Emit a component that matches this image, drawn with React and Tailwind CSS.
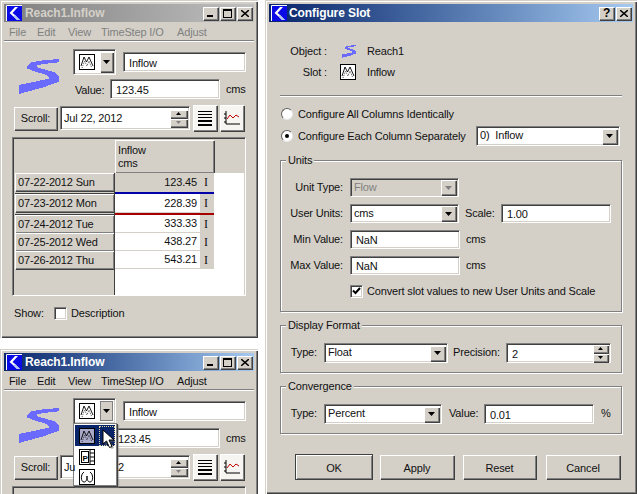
import React from 'react';

const sunken = 'border border-t-[#808080] border-l-[#808080] border-r-white border-b-white shadow-[inset_1px_1px_0_#404040,inset_-1px_-1px_0_#d4d0c8]';
const bevel = 'shadow-[inset_1px_1px_0_#fff,inset_-1px_-1px_0_#808080,1px_1px_0_#404040]';
const raised = `bg-[#d4d0c8] ${bevel}`;
const frame = 'bg-[#d4d0c8] shadow-[inset_1px_1px_0_#d4d0c8,inset_2px_2px_0_#fff,inset_-1px_-1px_0_#404040,inset_-2px_-2px_0_#808080]';

const Logo = () => (
  <svg width="16" height="16" viewBox="0 0 16 16" className="shrink-0">
    <rect width="16" height="16" fill="#0a0ae6" />
    <path d="M0.5 16V0.5H16" fill="none" stroke="#fff" />
    <path d="M12 2 L9 2 L3.5 8 L8 12 L11 15 L14 15 L9 10 L6.5 8 Z" fill="#fff" />
    <path d="M9 10 L14 15 L11 15 L7.5 11.5 Z" fill="#b4c8f0" />
  </svg>
);

const River = ({ w = 40, h = 35 }) => (
  <svg width={w} height={h} viewBox="0 0 120 105" shapeRendering="crispEdges" className="shrink-0">
    <path d="M120 0 L63 5 L38 10 L25 20 L23 28 L43 36 L83 48 L93 58 L48 68 L0 78 L0 105 L73 85 L120 68 L120 53 L108 40 L58 26 L53 20 L73 15 L120 10 Z" fill="#6a6aff" />
  </svg>
);

const SlotIcon = ({ size = 16, invert = false }) => (
  <svg width={size} height={size} viewBox="0 0 16 16" className="shrink-0">
    <rect x="0.5" y="0.5" width="15" height="15" fill={invert ? '#a8a8c8' : '#fff'} stroke="#000" />
    <path d="M2 12 L5 3 L7.5 8 L10 3 L14 12" fill="none" stroke="#000" strokeWidth="0.9" />
    <path d="M3 14 L5.5 7 L8 12 L10 7 L12.5 13" fill="none" stroke="#000" strokeWidth="0.7" strokeDasharray="1 1" />
  </svg>
);

const Arrow = ({ disabled, up, small }) => (
  <svg width={small ? 5 : 7} height={small ? 3 : 4} viewBox="0 0 7 4" preserveAspectRatio="none" className={up ? 'rotate-180' : ''}>
    <path d="M0 0 H7 L3.5 4 Z" fill={disabled ? '#808080' : '#000'} />
  </svg>
);

const Field = ({ w, h = 'h-[20px]', children, className = '' }) => (
  <div className={`${sunken} ${h} ${className} bg-white flex items-center pl-[5px] pt-[2px] shrink-0`} style={{ width: w }}>
    {children}
  </div>
);

const Combo = ({ w, h = 'h-[20px]', text, disabled }) => (
  <div className={`${sunken} ${h} flex items-center shrink-0 pl-[3px] pr-[2px] ${disabled ? 'bg-[#d4d0c8] text-[#808080]' : 'bg-white'}`} style={{ width: w }}>
    <span className="flex-1 whitespace-pre pb-px">{text}</span>
    <span className={`${raised} w-[15px] h-[15px] flex items-center justify-center`}>
      <Arrow disabled={disabled} />
    </span>
  </div>
);

const Spin = ({ wide }) => (
  <div className={`flex flex-col gap-px shrink-0 ${wide ? 'w-[17px]' : 'w-[15px]'}`}>
    <span className={`${raised} h-[8px] flex items-center justify-center`}><Arrow up small /></span>
    <span className={`${raised} h-[8px] flex items-center justify-center`}><Arrow small disabled={wide} /></span>
  </div>
);

const TitleBar = ({ title, active, buttons, gap = 'ml-[3px]' }) => (
  <div className={`h-[18px] flex items-center pl-[2px] pr-[2px] font-bold ${active ? 'bg-gradient-to-r from-[#0a246a] to-[#a6caf0] text-white' : 'bg-gradient-to-r from-[#808080] to-[#c0c0c0] text-[#d4d0c8]'}`}>
    <Logo />
    <span className={`${gap} flex-1 text-[12px] tracking-[-0.1px]`}>{title}</span>
    <div className="flex gap-[2px]">
      {buttons.map((b, i) => (
        <span key={i} className={`${raised} w-[15px] h-[13px] flex items-center justify-center text-black`}>
          {b}
        </span>
      ))}
    </div>
  </div>
);

const MinBtn = <span className="w-[6px] h-[2px] bg-black mt-[6px] -ml-[2px]" />;
const MaxBtn = <span className="w-[9px] h-[9px] border border-black border-t-2" />;
const CloseBtn = (
  <svg width="8" height="7" viewBox="0 0 8 7"><path d="M0 0 L8 7 M8 0 L0 7" stroke="#000" strokeWidth="1.5" /></svg>
);

const rows = [
  { date: '07-22-2012 Sun', val: '123.45', gray: true, h: 'h-[19px]' },
  { date: '07-23-2012 Mon', val: '228.39', h: 'h-[19px]' },
  { date: '07-24-2012 Tue', val: '333.33', h: 'h-[18px]' },
  { date: '07-25-2012 Wed', val: '438.27', h: 'h-[18px]' },
  { date: '07-26-2012 Thu', val: '543.21', h: 'h-[18px]' },
];

const SlotTable = ({ empty }) => (
  <div className={`${sunken} ml-[12px] mt-[6px] w-[234px] h-[159px] p-px`}>
    {!empty && (
      <>
        <div className="flex h-[34px] pl-px pt-px">
          <div className="w-[100px]" />
          <div className={`${raised} w-[99px] pl-[3px] pt-[4px] leading-[13px]`}>Inflow<br />cms</div>
        </div>
        <div className="flex h-[122px]">
          <div className="w-[101px] pl-px border-r border-[#404040]">
            {rows.map((r, i) => (
              <div key={r.date} className={i < 2 ? 'h-[21px] border-b border-[#404040] pb-[2px]' : 'h-[18px]'}>
                <div className={`${raised} h-[18px] pl-[3px] flex items-center`}>{r.date}</div>
              </div>
            ))}
          </div>
          <div className="flex-1 bg-white">
            {rows.map((r, i) => (
              <div key={r.date} className="w-[99px]">
                <div className={`flex ${r.h} border-b ${r.gray ? 'bg-[#d4d0c8] border-[#d4d0c8]' : 'border-[#d4d0c8]'}`}>
                  <span className="w-[85px] text-right pr-[3px] flex items-center justify-end">{r.val}</span>
                  <span className="flex-1 bg-[#d4d0c8] pl-[4px] flex items-center font-['Liberation_Serif',serif] text-[12px]">I</span>
                </div>
                {i === 0 && <div className="h-[2px] bg-[#0000a8]" />}
                {i === 1 && <div className="h-[2px] bg-[#a80000]" />}
              </div>
            ))}
          </div>
        </div>
      </>
    )}
  </div>
);

const ReachWindow = ({ active, pressed }) => (
  <div className={`${frame} w-[258px] h-[338px] pt-[4px] pb-[2px]`}>
    <div className="mx-[4px]">
      <TitleBar title="Reach1.Inflow" active={active} buttons={[MinBtn, MaxBtn, CloseBtn]} />
    </div>
    <div className={`flex h-[18px] items-center pl-[9px] pt-[2px] ${active ? '' : 'text-[#808080]'}`}>
      <span className="w-[28px]">File</span>
      <span className="w-[31px]">Edit</span>
      <span className="w-[33px]">View</span>
      <span className="w-[76px]">TimeStep I/O</span>
      <span>Adjust</span>
    </div>
    <div className="mx-[4px] h-[2px] border-t border-[#808080] border-b border-b-white" />
    <div className="flex pl-[19px] pt-[7px]">
      <div className="mt-[10px]"><River /></div>
      <div className="ml-[14px]">
        <div className="flex">
          <div className={`${sunken} w-[43px] h-[26px] flex items-center pl-[5px] pr-[2px] bg-white`}>
            <SlotIcon />
            <span className={`ml-[5px] w-[15px] h-[20px] flex items-center justify-center ${pressed ? 'bg-[#d4d0c8] border border-[#808080]' : raised}`}>
              <Arrow />
            </span>
          </div>
          <Field w={123} className="ml-[7px] mt-[3px]">Inflow</Field>
        </div>
        <div className="flex items-center mt-[4px] ml-[2px]">
          <span className="w-[35px] pt-[2px]">Value:</span>
          {active ? (
            <div className={`${sunken} w-[110px] h-[20px] bg-white`} />
          ) : (
            <Field w={110}>123.45</Field>
          )}
          <span className="ml-[6px] pt-px">cms</span>
        </div>
      </div>
    </div>
    <div className="flex items-center pl-[14px] mt-[6px]">
      <div className={`${raised} w-[43px] h-[23px] flex items-center justify-center`}>Scroll:</div>
      <div className={`${sunken} ml-[3px] w-[130px] h-[24px] bg-white flex items-center pl-[3px] pr-[2px]`}>
        <span className="flex-1">{active ? '' : 'Jul 22, 2012'}</span>
        <Spin wide />
      </div>
      <div className={`bg-[#f6f5f2] ${bevel} ml-[3px] w-[24px] h-[26px] flex flex-col items-center justify-center gap-[2px]`}>
        <span className="w-[14px] h-px bg-black" />
        <span className="w-[14px] h-px bg-black" />
        <span className="w-[14px] h-px bg-black" />
        <span className="w-[14px] h-[2px] bg-black" />
        <span className="w-[14px] h-[2px] bg-black" />
      </div>
      <div className={`bg-[#f6f5f2] ${bevel} ml-[3px] w-[24px] h-[26px] flex items-center justify-center`}>
        <svg width="18" height="18" viewBox="0 0 18 18">
          <path d="M3 2 V15 H17 M1 5 H3 M1 9 H3 M1 13 H3" fill="none" stroke="#000" />
          <path d="M4 10 L7 6 L10 9 L13 6 L16 8" fill="none" stroke="#c00000" />
        </svg>
      </div>
    </div>
    <SlotTable empty={active} />
    {!active && (
      <div className="flex items-center pl-[14px] mt-[9px]">
        <span className="w-[40px]">Show:</span>
        <span className={`${sunken} w-[13px] h-[13px] bg-white`} />
        <span className="ml-[4px]">Description</span>
      </div>
    )}
  </div>
);

const Group = ({ label, className, children }) => (
  <div className={`relative mx-[15px] border border-[#808080] shadow-[inset_1px_1px_0_#fff,1px_1px_0_#fff] ${className}`}>
    <span className="absolute -top-[8px] left-[5px] bg-[#d4d0c8] px-[2px] leading-[14px]">{label}</span>
    {children}
  </div>
);

const Label = ({ w, children }) => (
  <span className="text-right shrink-0 mr-[7px] pb-px" style={{ width: w }}>{children}</span>
);

const Radio = ({ on }) => (
  <span className="w-[12px] h-[12px] rounded-full bg-white border border-t-[#606060] border-l-[#606060] border-r-[#e8e8e8] border-b-[#e8e8e8] flex items-center justify-center shrink-0">
    {on && <span className="w-[4px] h-[4px] rounded-full bg-black" />}
  </span>
);

const Btn = ({ w, def, children }) => (
  <div className={`${raised} h-[24px] pt-[2px] flex items-center justify-center shrink-0 ${def ? 'outline outline-1 outline-[#404040]' : ''}`} style={{ width: w }}>
    {children}
  </div>
);

const ConfigureSlot = () => (
  <div className={`${frame} absolute left-[265px] top-0 w-[372px] h-[494px] pt-[4px]`}>
    <div className="mx-[4px]">
      <TitleBar title="Configure Slot" active gap="ml-[2px]" buttons={[<span className="text-[12px] font-bold">?</span>, CloseBtn]} />
    </div>
    <div className="flex items-center mt-[21px] h-[16px]">
      <span className="w-[62px] text-right">Object :</span>
      <span className="ml-[14px] w-[26px]"><River w={16} h={13} /></span>
      <span>Reach1</span>
    </div>
    <div className="flex items-center mt-[5px] h-[16px]">
      <span className="w-[62px] text-right">Slot :</span>
      <span className="ml-[13px] w-[27px]"><SlotIcon /></span>
      <span>Inflow</span>
    </div>
    <div className="mx-[15px] mt-[15px] h-[2px] border-t border-[#808080] border-b border-b-white" />
    <div className="flex items-center ml-[16px] mt-[10px] h-[14px]">
      <Radio />
      <span className="ml-[5px]">Configure All Columns Identically</span>
    </div>
    <div className="flex items-center ml-[16px] h-[20px] mt-[5px]">
      <Radio on />
      <span className="ml-[5px] w-[178px]">Configure Each Column Separately</span>
      <Combo w={144} text="0)  Inflow" />
    </div>
    <Group label="Units" className="mt-[14px] h-[152px] pt-[17px]">
      <div className="flex items-center">
        <Label w={62}>Unit Type:</Label>
        <Combo w={109} h="h-[19px]" text="Flow" disabled />
      </div>
      <div className="flex items-center mt-[7px]">
        <Label w={62}>User Units:</Label>
        <Combo w={109} h="h-[19px]" text="cms" />
        <span className="ml-[6px] w-[36px] pb-px">Scale:</span>
        <Field w={110} h="h-[19px]">1.00</Field>
      </div>
      <div className="flex items-center mt-[7px]">
        <Label w={62}>Min Value:</Label>
        <Field w={110} h="h-[19px]">NaN</Field>
        <span className="ml-[6px]">cms</span>
      </div>
      <div className="flex items-center mt-[7px]">
        <Label w={62}>Max Value:</Label>
        <Field w={110} h="h-[19px]">NaN</Field>
        <span className="ml-[6px]">cms</span>
      </div>
      <div className="flex items-center ml-[69px] mt-[8px]">
        <span className={`${sunken} w-[13px] h-[13px] bg-white flex items-center justify-center`}>
          <svg width="9" height="8" viewBox="0 0 9 8"><path d="M1 3.5 L3.5 6 L8 1" fill="none" stroke="#000" strokeWidth="2" /></svg>
        </span>
        <span className="ml-[4px]">Convert slot values to new User Units and Scale</span>
      </div>
    </Group>
    <Group label="Display Format" className="mt-[13px] h-[48px] pt-[17px]">
      <div className="flex items-center">
        <Label w={36}>Type:</Label>
        <Combo w={124} text="Float" />
        <span className="ml-[5px] w-[53px] pb-px">Precision:</span>
        <div className={`${sunken} w-[105px] h-[20px] bg-white flex items-center pl-[5px] pr-[2px]`}>
          <span className="flex-1 pt-[2px]">2</span>
          <Spin />
        </div>
      </div>
    </Group>
    <Group label="Convergence" className="mt-[13px] h-[48px] pt-[17px]">
      <div className="flex items-center">
        <Label w={36}>Type:</Label>
        <Combo w={118} text="Percent" />
        <span className="ml-[7px] w-[35px] pb-px">Value:</span>
        <Field w={110}>0.01</Field>
        <span className="ml-[7px] pb-px">%</span>
      </div>
    </Group>
    <div className="flex ml-[31px] mt-[21px]">
      <Btn w={76} def>OK</Btn>
      <div className="ml-[8px]"><Btn w={74}>Apply</Btn></div>
      <div className="ml-[9px]"><Btn w={73}>Reset</Btn></div>
      <div className="ml-[10px]"><Btn w={74}>Cancel</Btn></div>
    </div>
  </div>
);

const TypeMenu = () => (
  <div className="absolute left-[73px] top-[423px] w-[44px] h-[63px] bg-white border border-[#808080] shadow-[1px_1px_0_#404040,2px_2px_1px_#80808080] px-px pt-px flex flex-col">
    <div className="flex h-[21px] bg-[#0a246a] items-center pl-[4px]">
      <SlotIcon invert />
      <span className="ml-[4px] w-[18px] h-[20px] border border-dotted border-[#e0d8a0]" />
    </div>
    <div className="pl-[4px] mt-[3px]">
      <svg width="16" height="16" viewBox="0 0 16 16">
        <rect x="0.5" y="0.5" width="15" height="15" fill="#fff" stroke="#000" />
        <rect x="2.5" y="2.5" width="7" height="11" fill="none" stroke="#000" />
        <path d="M11 1 V15 M11 4 H15 M11 8 H15 M11 12 H15" stroke="#000" />
        <text x="3.5" y="11.5" fontSize="8" fontWeight="700" fill="#000">P</text>
      </svg>
    </div>
    <div className="pl-[4px] mt-[4px]">
      <svg width="16" height="16" viewBox="0 0 16 16">
        <rect x="0.5" y="0.5" width="15" height="15" fill="#fff" stroke="#000" />
        <path d="M5 3 C1.5 5 1.5 13 5 13 C7 13 8 11 8 7 C8 11 9 13 11 13 C14.5 13 14.5 5 11 3" fill="none" stroke="#000" />
      </svg>
    </div>
  </div>
);

const Pointer = () => (
  <svg width="16" height="22" viewBox="0 0 16 22" className="absolute left-[102px] top-[429px]">
    <path d="M3 3 L3 17 L6.5 14 L9.5 20 L12 19 L9 13 L14 13 Z" fill="#606060" opacity="0.5" />
    <path d="M1 1 L1 15 L4.5 12 L7.5 18.5 L10 17.5 L7 11 L12 11 Z" fill="#fff" stroke="#000" />
  </svg>
);

export default function App() {
  return (
    <div className="relative w-[637px] h-[494px] overflow-hidden bg-white text-[11px] tracking-[-0.15px] text-[#111] font-['Liberation_Sans',sans-serif]">
      <ReachWindow />
      <div className="absolute left-0 top-[349px] h-[145px] overflow-hidden">
        <ReachWindow active pressed />
      </div>
      <TypeMenu />
      {/* text peeking out around the open menu */}
      <span className="absolute left-[118px] top-[431px]">123.45</span>
      <span className="absolute left-[64px] top-[459px]">Ju</span>
      <span className="absolute left-[118px] top-[459px]">2</span>
      <Pointer />
      <ConfigureSlot />
    </div>
  );
}
